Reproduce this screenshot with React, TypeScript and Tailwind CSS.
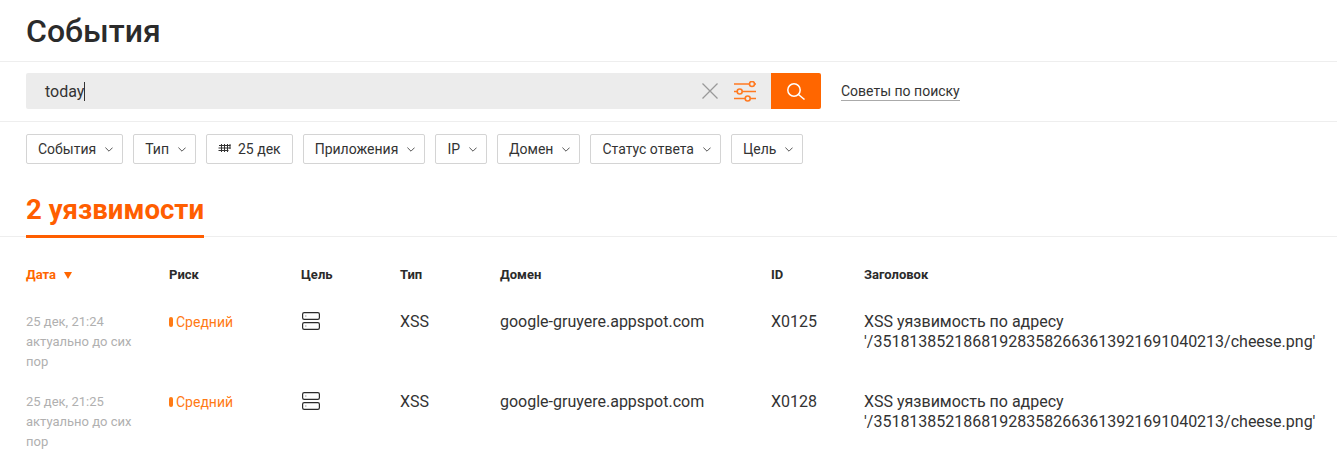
const filters = ["Приложения", "IP", "Домен", "Статус ответа", "Цель"];

const rows = [
  { date: "25 дек, 21:24", id: "X0125" },
  { date: "25 дек, 21:25", id: "X0128" },
];

const gridCols = "grid grid-cols-[143px_132px_99px_100px_271px_93px_1fr]";

function Chevron() {
  return (
    <svg width="8" height="5" viewBox="0 0 8 5" fill="none" stroke="#555" strokeWidth="1" className="ml-[9px]">
      <path d="M.4.6L4 4.200 7.600.6" />
    </svg>
  );
}

function FilterButton({ label }: { label: string }) {
  return (
    <button className="flex h-[30px] items-center rounded-[2px] border border-[#d4d4d4] bg-white pl-[11px] pr-[9px] text-[14px] text-[#333]">
      {label}
      <Chevron />
    </button>
  );
}

function ServerIcon() {
  return (
    <svg width="18" height="18" viewBox="0 0 18 18" fill="none" stroke="#2b2b2b" strokeWidth="1.200">
      <rect x=".6" y=".6" width="16.800" height="6.800" rx="1.600" />
      <rect x=".6" y="10.600" width="16.800" height="6.800" rx="1.600" />
      <path d="M3 4h1.500M3 14h1.500" stroke="#999" />
    </svg>
  );
}

export default function App() {
  return (
    <div className="min-h-[472px] overflow-hidden bg-white font-['Roboto',sans-serif] text-[#333]">
      {/* title */}
      <div className="flex h-[62px] items-center border-b border-[#eeeeee] px-[26px]">
        <h1 className="text-[32px] font-medium text-[#2b2b2b]">События</h1>
      </div>
      {/* search */}
      <div className="flex h-[60px] items-start border-b border-[#eeeeee] px-[26px] pt-[11px]">
        <div className="flex h-[36px] w-[745px] items-center rounded-l-[2px] bg-[#ececec] pl-[19px]">
          <span className="pt-px text-[16px] text-[#333]">today</span>
          <span className="h-[19px] w-px bg-[#333]" />
          <svg width="16" height="16" viewBox="0 0 16 16" fill="none" stroke="#999" strokeWidth="1.300" className="ml-auto mr-[16px]">
            <path d="M.5.5l15 15M15.500.5l-15 15" />
          </svg>
          <svg width="22" height="21" viewBox="0 0 22 21" fill="none" stroke="#ff7a22" strokeWidth="1.600" className="mr-[15px]">
            <path d="M0 3h15.300M20.700 3H22M0 10.500h3M8.400 10.500H22M0 17.500h11M16.400 17.500H22" />
            <circle cx="18" cy="3" r="2.500" />
            <circle cx="5.700" cy="10.500" r="2.500" />
            <circle cx="13.700" cy="17.500" r="2.500" />
          </svg>
        </div>
        <button className="flex h-[36px] w-[50px] items-center justify-center rounded-r-[2px] bg-[#ff6600]">
          <svg width="18" height="17" viewBox="0 0 18 17" fill="none" stroke="#fff" strokeWidth="1.500">
            <circle cx="7" cy="7" r="6.200" />
            <path d="M11.500 11.500L17.500 16.500" />
          </svg>
        </button>
        <a className="ml-[20px] mt-[9px] border-b border-[#aaaaaa] text-[14px] leading-[18px] text-[#333]">
          Советы по поиску
        </a>
      </div>
      {/* filters */}
      <div className="flex gap-[10px] px-[26px] pt-[12px]">
        <FilterButton label="События" />
        <FilterButton label="Тип" />
        <button className="flex h-[30px] items-center rounded-[2px] border border-[#d4d4d4] bg-white px-[11px] text-[14px] text-[#333]">
          <svg width="13" height="10" viewBox="0 0 13 10" fill="none" stroke="#333" strokeWidth="1" className="mr-[7px] mb-[2px]">
            <path d="M1 2.500h11.500M.5 5h12M.5 7.500h10M3.500 1v8M6.500 1v8M9.500 1v8M12 1v5" />
          </svg>
          25 дек
        </button>
        {filters.map((f) => (
          <FilterButton key={f} label={f} />
        ))}
      </div>
      {/* tab */}
      <div className="mt-[26px] h-[47px] border-b border-[#eeeeee] px-[26px]">
        <div className="h-[48px] w-[178px] whitespace-nowrap border-b-[3px] border-[#ff5e00] text-[27.600px] font-bold leading-[39px] text-[#ff5e00]">
          2 уязвимости
        </div>
      </div>
      {/* table head */}
      <div className={`${gridCols} mt-[28px] px-[26px] text-[13px] font-bold leading-[20px] text-[#2b2b2b]`}>
        <div className="flex items-center text-[#ff6600]">
          Дата
          <svg width="8" height="7" viewBox="0 0 8 7" fill="#ff6600" className="ml-[8px]">
            <path d="M0 0h8L4 7z" />
          </svg>
        </div>
        <div>Риск</div>
        <div>Цель</div>
        <div>Тип</div>
        <div>Домен</div>
        <div>ID</div>
        <div>Заголовок</div>
      </div>
      {/* table rows */}
      <div className="mt-[27px] flex flex-col">
        {rows.map((r) => (
          <div key={r.id} className={`${gridCols} h-[80px] px-[26px] text-[16px] leading-[20px] text-[#333]`}>
            <div className="w-[118px] text-[13px] text-[#b0b0b0]">
              {r.date}
              <br />
              актуально до сих пор
            </div>
            <div className="flex h-[20px] items-center text-[14px] text-[#ff7a14]">
              <span className="mr-[3px] h-[10px] w-[4px] rounded-full bg-[#ff7a14]" />
              Средний
            </div>
            <div className="h-[20px] pl-px">
              <ServerIcon />
            </div>
            <div>XSS</div>
            <div>google-gruyere.appspot.com</div>
            <div>{r.id}</div>
            <div className="whitespace-nowrap">
              XSS уязвимость по адресу
              <br />
              '/351813852186819283582663613921691040213/cheese.png'
            </div>
          </div>
        ))}
      </div>
    </div>
  );
}
